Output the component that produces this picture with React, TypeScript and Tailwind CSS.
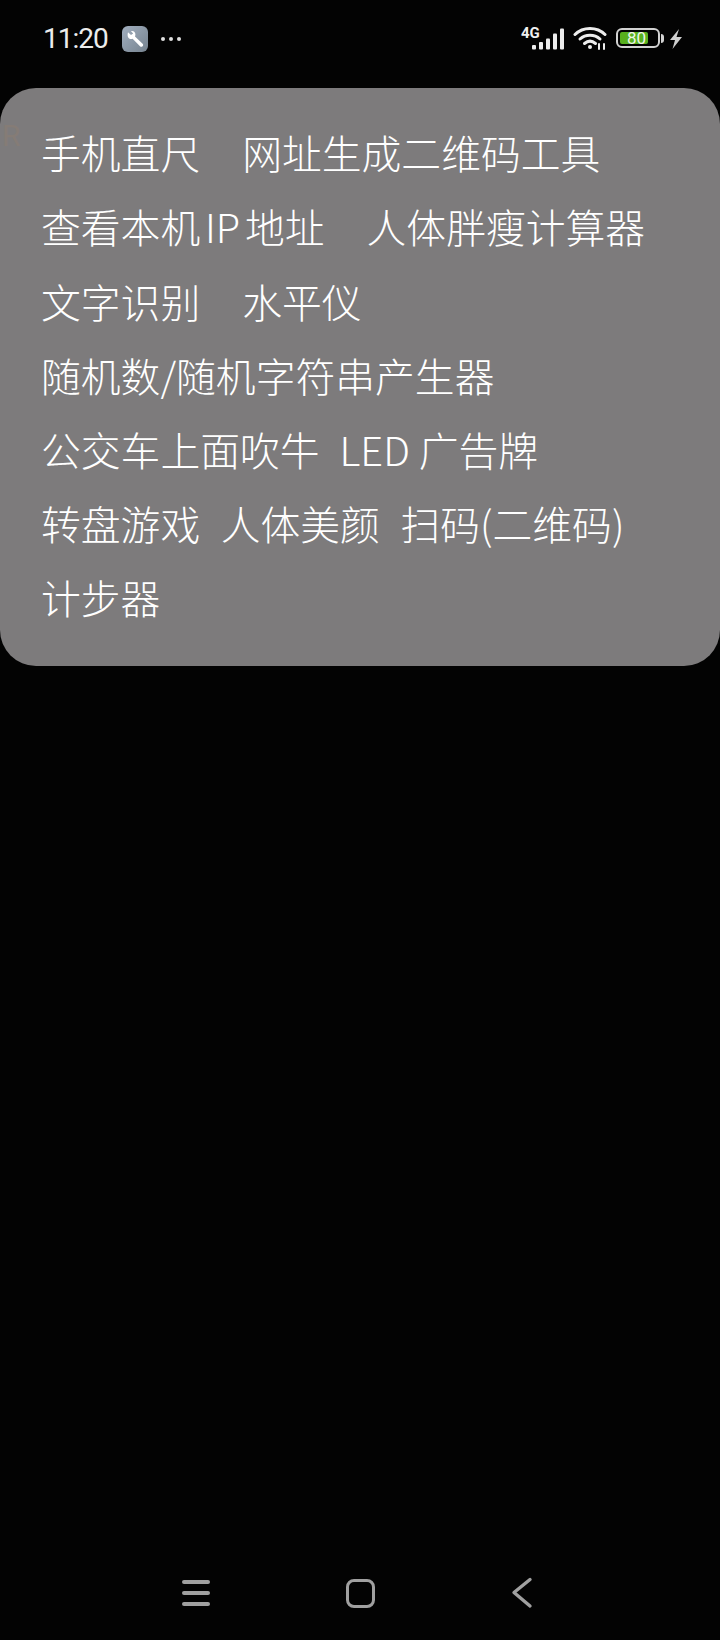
const rows: { items: string[]; gap: string }[] = [
  { items: ['手机直尺', '网址生成二维码工具'], gap: 'gap-[42px]' },
  { items: ['查看本机 IP 地址', '人体胖瘦计算器'], gap: 'gap-[42px]' },
  { items: ['文字识别', '水平仪'], gap: 'gap-[42px]' },
  { items: ['随机数/随机字符串产生器'], gap: 'gap-0' },
  { items: ['公交车上面吹牛', 'LED 广告牌'], gap: 'gap-[20px]' },
  { items: ['转盘游戏', '人体美颜', '扫码(二维码)'], gap: 'gap-[20.5px]' },
  { items: ['计步器'], gap: 'gap-0' },
];

function Wrench() {
  return (
    <div className="flex h-[26px] w-[26px] items-center justify-center rounded-[6px] bg-gradient-to-br from-[#a2afbf] to-[#76838f]">
      <svg width="21" height="21" viewBox="0 0 21 21" fill="none">
        <path
          d="M3 3.2 L6 6 L8.2 4.6 L6 2.2 C8.2 1.4 10.6 3 10.4 5.6 C10.4 6.4 10.2 7 10 7.6 L17.6 14.8 C18.6 15.8 18.2 17.4 16.8 17.8 C16 18 15.4 17.6 15 17.2 L7.6 9.8 C5 10.8 1.4 8.8 3 3.2 Z"
          fill="#ffffff"
        />
      </svg>
    </div>
  );
}

function StatusRight() {
  return (
    <div className="flex items-start">
      <div className="relative h-[30px] w-[46px]">
        <span className="absolute left-[1px] top-[1px] font-['Roboto',sans-serif] text-[15px] font-bold leading-[12px] text-[#f0f0f0]">4G</span>
        <svg className="absolute left-0 top-0" width="46" height="30" viewBox="0 0 46 30" fill="#ededed">
          <rect x="12" y="19" width="4" height="4.5" rx="1" />
          <rect x="19" y="16" width="4" height="7.5" rx="1" />
          <rect x="26" y="12.5" width="4" height="11" rx="1" />
          <rect x="33" y="7.5" width="4" height="16" rx="1" />
          <rect x="40" y="2.5" width="4" height="21" rx="1" />
        </svg>
      </div>
      <svg className="ml-[7px]" width="34" height="24" viewBox="0 0 34 24" fill="none" stroke="#ededed" strokeWidth="3" strokeLinecap="round">
        <path d="M2 8.5 C10 0.5 24 0.5 32 8.5" />
        <path d="M7 13 C12.5 8 21.5 8 27 13" />
        <path d="M11.5 17.5 C15 14.5 19 14.5 22.5 17.5" />
        <circle cx="17" cy="21" r="2" fill="#ededed" stroke="none" />
        <path d="M26 18 V23 M31 18 V23" strokeWidth="2" />
      </svg>
      <div className="ml-[9px] mt-[2px] flex items-center">
        <div className="relative h-[20px] w-[44px] rounded-[6px] border-2 border-[#d2d2d2] p-[2px]">
          <div className="h-full w-[28px] rounded-[2px] bg-[#58b01e]" />
          <span className="absolute left-[9px] top-0 font-['Roboto',sans-serif] text-[17px] leading-[16px] text-[#eef5e8]">80</span>
        </div>
        <div className="ml-[1px] h-[9px] w-[3px] rounded-r-sm bg-[#d2d2d2]" />
      </div>
      <svg className="ml-[5px] mt-[3px]" width="13" height="20" viewBox="0 0 13 20" fill="#cfcfcf">
        <path d="M10 0 L1 11 H6 L3.5 20 L13 8 H7.5 Z" />
      </svg>
    </div>
  );
}

export default function App() {
  return (
    <div className="flex h-[1640px] w-[720px] flex-col bg-[#030303] font-['Noto_Sans_CJK_SC','Noto_Sans',sans-serif]">
      <div className="flex h-[88px] items-start justify-between pl-[43px] pr-[38px] pt-[26px]">
        <div className="flex items-center">
          <span className="w-[64px] font-['Roboto',sans-serif] text-[28px] leading-[26px] tracking-[-1px] text-[#ececec]">11:20</span>
          <div className="ml-[15px]">
            <Wrench />
          </div>
          <div className="ml-[13px] flex gap-[4px]">
            <span className="h-[4px] w-[4px] rounded-full bg-[#e0e0e0]" />
            <span className="h-[4px] w-[4px] rounded-full bg-[#e0e0e0]" />
            <span className="h-[4px] w-[4px] rounded-full bg-[#e0e0e0]" />
          </div>
        </div>
        <StatusRight />
      </div>

      <div className="relative h-[578px] overflow-hidden rounded-[36px] bg-[#7d7b7c] pl-[41px] pt-[27px]">
        <span className="absolute left-[2px] top-[33px] font-['Roboto',sans-serif] text-[30px] leading-none text-[#857c76]">R</span>
        {rows.map((row) => (
          <div key={row.items[0]} className={`flex h-[74.2px] items-center ${row.gap}`}>
            {row.items.map((item) => (
              <span
                key={item}
                className={`whitespace-nowrap text-[39.8px] font-light leading-none text-white ${item.includes('IP') ? '[word-spacing:-4px]' : ''}`}
              >
                {item}
              </span>
            ))}
          </div>
        ))}
      </div>

      <div className="flex-1" />

      <div className="mb-[27px] flex h-[40px] items-center pl-[182px]">
        <div className="flex w-[28px] flex-col gap-[7px]">
          <div className="h-[4px] rounded-full bg-[#a0a0a0]" />
          <div className="h-[4px] rounded-full bg-[#a0a0a0]" />
          <div className="h-[4px] rounded-full bg-[#a0a0a0]" />
        </div>
        <div className="ml-[136px] h-[29px] w-[29px] rounded-[8px] border-[3px] border-[#a0a0a0]" />
        <svg className="ml-[136px]" width="22" height="32" viewBox="0 0 22 32" fill="none" stroke="#a0a0a0" strokeWidth="3.4" strokeLinecap="round" strokeLinejoin="round">
          <path d="M19 2.5 L3 15.5 L19 29" />
        </svg>
      </div>
    </div>
  );
}
